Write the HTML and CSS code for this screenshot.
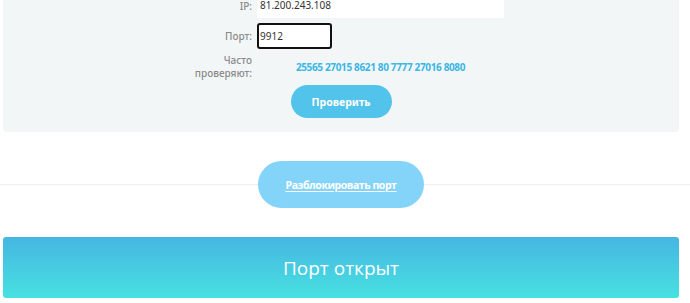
FILE: index.html
```html
<!DOCTYPE html>
<html lang="ru">
<head>
<meta charset="utf-8">
<title>Проверка порта</title>
<link rel="stylesheet" href="styles.css">
</head>
<body>
<div class="panel">
  <div class="form">
    <label class="label label-ip">IP:</label>
    <div class="field"><input class="input input-ip" type="text" value="81.200.243.108"></div>
    <label class="label">Порт:</label>
    <div class="field"><input class="input input-port" type="text" value="9912"></div>
    <div class="label">Часто<br>проверяют:</div>
    <div class="popular">25565 27015 8621 80 7777 27016 8080</div>
  </div>
  <div class="actions">
    <button class="btn-check">Проверить</button>
  </div>
</div>
<div class="divider">
  <button class="btn-unblock"><span>Разблокировать порт</span></button>
</div>
<div class="result">Порт открыт</div>
</body>
</html>
```
FILE: styles.css
```css
* { box-sizing: border-box; }
html, body { margin: 0; padding: 0; background: #fff; overflow: hidden; }
body { font-family: "Noto Sans", "DejaVu Sans", sans-serif; width: 690px; height: 303px; }

.panel {
  margin: -20px 11px 0 3px;
  background: #f2f6f7;
  border-radius: 4px;
  padding: 12px 0 14px;
}
.form {
  display: grid;
  grid-template-columns: 249px 247px;
  column-gap: 5px;
  row-gap: 5px;
  align-items: center;
}
.label {
  text-align: right;
  font-size: 10px;
  font-weight: 500;
  color: #8a8a8a;
  line-height: 13px;
}
.label-ip { align-self: end; line-height: 11px; padding-bottom: 6px; }
.input {
  display: block;
  height: 26px;
  border: none;
  background: #fff;
  font-family: "Noto Sans", "DejaVu Sans", sans-serif;
  font-size: 10px;
  color: #333;
  padding: 0 3px;
  outline: none;
}
.input-ip { width: 247px; }
.input-port { width: 75px; border: 2px solid #111; border-radius: 3px; padding: 0 1px; }
.popular {
  text-align: center;
  font-size: 10px;
  font-weight: 700;
  letter-spacing: -0.35px;
  color: #3cb6e3;
}
.actions { display: flex; justify-content: center; margin-top: 5px; }
.btn-check {
  width: 101px;
  height: 33px;
  border: none;
  border-radius: 17px;
  background: #52c3ea;
  color: #fff;
  font-family: "Noto Sans", "DejaVu Sans", sans-serif;
  font-size: 10.5px;
  font-weight: 700;
}
.divider {
  display: flex;
  justify-content: center;
  padding: 29px 8px 29px 0;
  background: linear-gradient(#eceff0, #eceff0) 0 52px / 100% 1px no-repeat;
}
.btn-unblock {
  width: 166px;
  height: 47px;
  border: none;
  border-radius: 24px;
  background: #84d3f9;
  color: #fff;
  font-family: "Open Sans", sans-serif;
  font-size: 10.5px;
  font-weight: 700;
  letter-spacing: -0.45px;
}
.btn-unblock span { text-decoration: underline; text-underline-offset: 2px; }
.result {
  margin: 0 11px 0 3px;
  height: 61px;
  border-radius: 3px;
  background: linear-gradient(#46b6e2, #47e1e1);
  color: #fff;
  font-family: "Open Sans", sans-serif;
  font-size: 19px;
  display: flex;
  align-items: center;
  justify-content: center;
}
```
